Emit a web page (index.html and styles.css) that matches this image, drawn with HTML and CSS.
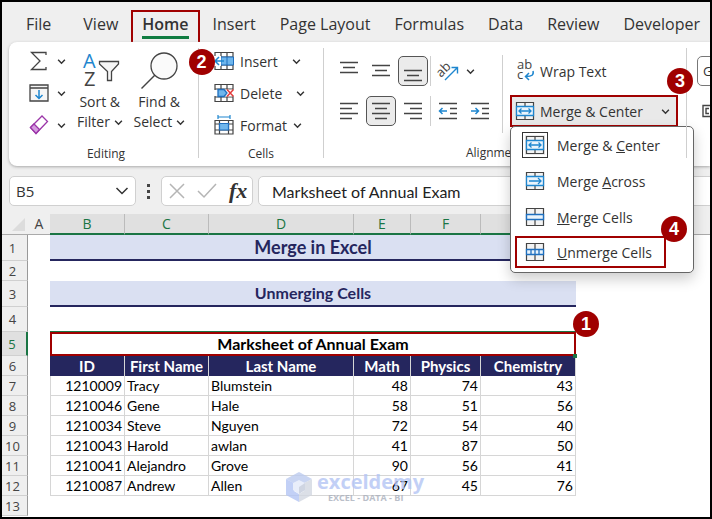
FILE: index.html
```html
<!DOCTYPE html>
<html lang="en">
<head>
    <meta charset="UTF-8">
    <meta name="viewport" content="width=device-width, initial-scale=1.0">
    <title>Merge in Excel</title>
    <link rel="stylesheet" href="styles.css">
</head>
<body>
    <!-- Shared icons -->
    <svg class="sprite" aria-hidden="true">
        <symbol id="chevron" viewBox="0 0 8 8">
            <path d="M1 2.5 L4 5.5 L7 2.5" fill="none" stroke="#333" stroke-width="1.3"/>
        </symbol>
        <symbol id="merge-center" viewBox="0 0 20 20">
            <path d="M1.5 1.5H18.5V18.5H1.5ZM10 1.5V5M10 15V18.5" fill="#f3f3f3" stroke="#444" stroke-width="1.2"/>
            <path d="M1.5 5.5H18.5V14.5H1.5Z" fill="#eaf4fc" stroke="#1e86cf" stroke-width="1.3"/>
            <path d="M4 10H16M6.5 7.5L4 10L6.5 12.5M13.5 7.5L16 10L13.5 12.5" fill="none" stroke="#1e86cf" stroke-width="1.3"/>
        </symbol>
        <symbol id="merge-across" viewBox="0 0 20 20">
            <path d="M1.5 1.5H18.5V18.5H1.5ZM10 1.5V5M10 15V18.5" fill="#f3f3f3" stroke="#444" stroke-width="1.2"/>
            <path d="M1.5 5.5H18.5V14.5H1.5Z" fill="#eaf4fc" stroke="#1e86cf" stroke-width="1.3"/>
            <path d="M4 10H16M13 7L16 10L13 13" fill="none" stroke="#1e86cf" stroke-width="1.3"/>
        </symbol>
        <symbol id="merge-cells" viewBox="0 0 20 20">
            <path d="M1.5 1.5H18.5V18.5H1.5ZM10 1.5V7M10 13V18.5" fill="#f3f3f3" stroke="#444" stroke-width="1.2"/>
            <path d="M1.5 7.5H18.5V12.5H1.5Z" fill="#eaf4fc" stroke="#1e6fbf" stroke-width="1.4"/>
        </symbol>
        <symbol id="unmerge-cells" viewBox="0 0 20 20">
            <path d="M1.5 1.5H18.5V18.5H1.5ZM10 1.5V7M10 13V18.5" fill="#f3f3f3" stroke="#444" stroke-width="1.2"/>
            <path d="M1.5 7.5H18.5V12.5H1.5ZM6 7.5V12.5M10 7.5V12.5M14 7.5V12.5" fill="#eaf4fc" stroke="#1e6fbf" stroke-width="1.3"/>
        </symbol>
    </svg>

    <div class="window">
        <nav class="tabs">
            <button type="button" class="tab tab-file">File</button>
            <button type="button" class="tab">View</button>
            <button type="button" class="tab tab-active">Home<span class="badge badge-home">2</span></button>
            <button type="button" class="tab">Insert</button>
            <button type="button" class="tab">Page Layout</button>
            <button type="button" class="tab">Formulas</button>
            <button type="button" class="tab">Data</button>
            <button type="button" class="tab">Review</button>
            <button type="button" class="tab">Developer</button>
        </nav>

        <div class="ribbon">
            <section class="group group-editing">
                <div class="group-body">
                    <div class="stack">
                        <button type="button" class="small-button" aria-label="AutoSum">
                            <svg class="icon" viewBox="0 0 20 20"><path d="M17 4V1.5H2.5L11 10L2.5 18.5H17V16" fill="none" stroke="#444" stroke-width="1.3"/></svg>
                            <svg class="chevron"><use href="#chevron"/></svg>
                        </button>
                        <button type="button" class="small-button" aria-label="Fill">
                            <svg class="icon" viewBox="0 0 20 20"><path d="M1 2H19V18H1ZM1 5H19" fill="#f6f6f6" stroke="#444" stroke-width="1.3"/><path d="M10 7V15.5M6.5 12L10 15.5L13.5 12" fill="none" stroke="#1e86cf" stroke-width="1.5"/></svg>
                            <svg class="chevron"><use href="#chevron"/></svg>
                        </button>
                        <button type="button" class="small-button" aria-label="Clear">
                            <svg class="icon" viewBox="0 0 20 20"><path d="M1.5 12.5L13 1L18.5 6.5L7 18.5Z" fill="#fff" stroke="#9b35a8" stroke-width="1.3"/><path d="M1.5 12.5L5 9L10.5 14.5L7 18.5Z" fill="#d59be0" stroke="#9b35a8" stroke-width="1.3"/></svg>
                            <svg class="chevron"><use href="#chevron"/></svg>
                        </button>
                    </div>
                    <button type="button" class="big-button">
                        <svg class="big-icon" viewBox="0 0 40 40">
                            <text x="3" y="16" font-family="Open Sans" font-size="20" fill="#1e86cf">A</text>
                            <text x="4" y="34" font-family="Open Sans" font-size="20" fill="#444">Z</text>
                            <path d="M19.5 9.500H38.5V12L31.5 19.5V28.5H27.5V19.5L19.5 12Z" fill="#f6f6f6" stroke="#444" stroke-width="1.3"/>
                        </svg>
                        <span>Sort &amp;</span>
                        <span>Filter <svg class="chevron"><use href="#chevron"/></svg></span>
                    </button>
                    <button type="button" class="big-button">
                        <svg class="big-icon" viewBox="0 0 40 40">
                            <circle cx="25" cy="14" r="13" fill="#fafafa" stroke="#444" stroke-width="1.3"/>
                            <path d="M16 23L2.5 36.5" stroke="#444" stroke-width="1.4"/>
                        </svg>
                        <span>Find &amp;</span>
                        <span>Select <svg class="chevron"><use href="#chevron"/></svg></span>
                    </button>
                </div>
                <div class="group-label">Editing</div>
            </section>

            <section class="group group-cells">
                <div class="group-body">
                    <div class="stack">
                        <button type="button" class="row-button">
                            <svg class="icon" viewBox="0 0 20 20"><path d="M1 1.5H19V18.5H1ZM1 6H19M1 14H19M7 1.5V18.5M13 1.5V18.5" fill="#fff" stroke="#444" stroke-width="1.2"/><path d="M7 6H19.5V14H7Z" fill="#6fb6ec" stroke="#1e6fbf"/><path d="M13 6V14" stroke="#1e6fbf"/><path d="M0 5H7V15H0Z" fill="#fff"/><path d="M1 10H10M5 6L1 10L5 14" fill="none" stroke="#1e86cf" stroke-width="1.5"/></svg>
                            <span>Insert</span>
                            <svg class="chevron chevron-far"><use href="#chevron"/></svg>
                        </button>
                        <button type="button" class="row-button">
                            <svg class="icon" viewBox="0 0 20 20"><path d="M1 1.5H19V18.5H1ZM1 6H19M1 14H19M7 1.5V6M13 1.5V6M7 14V18.5M13 14V18.5" fill="#fff" stroke="#444" stroke-width="1.2"/><path d="M0 7H3V13H0ZM11 6.7H20V13.3H11Z" fill="#fff"/><path d="M4 6.5H10L13 10L10 13.5H4Z" fill="#6fb6ec" stroke="#1e6fbf" stroke-width="1.3"/><path d="M13 6.5L19.5 13.5M19.5 6.5L13 13.5" stroke="#e33b3b" stroke-width="1.5"/></svg>
                            <span>Delete</span>
                            <svg class="chevron chevron-far"><use href="#chevron"/></svg>
                        </button>
                        <button type="button" class="row-button">
                            <svg class="icon" viewBox="0 0 20 20"><path d="M1 5.5H19V19H1ZM1 9H19M1 15H19M5.5 5.5V19M14.5 5.5V19" fill="#fff" stroke="#444" stroke-width="1.2"/><path d="M5.5 8.5H14.5V15H5.5Z" fill="#6fb6ec" stroke="#1e6fbf" stroke-width="1.2"/><path d="M4 2H16M4 0V4M16 0V4" stroke="#1e86cf" stroke-width="1.2"/></svg>
                            <span>Format</span>
                            <svg class="chevron"><use href="#chevron"/></svg>
                        </button>
                    </div>
                </div>
                <div class="group-label">Cells</div>
            </section>

            <section class="group group-alignment">
                <div class="group-body">
                    <div class="tool-rows">
                        <div class="tool-row">
                            <button type="button" class="tool" aria-label="Top Align"><svg class="icon" viewBox="0 0 20 20"><path d="M1 1.5H19M4 6.5H16M1 11.5H19" stroke="#444" stroke-width="1.3"/></svg></button>
                            <button type="button" class="tool" aria-label="Middle Align"><svg class="icon" viewBox="0 0 20 20"><path d="M1 4.5H19M4 9.5H16M1 14.5H19" stroke="#444" stroke-width="1.3"/></svg></button>
                            <button type="button" class="tool tool-on" aria-label="Bottom Align"><svg class="icon" viewBox="0 0 20 20"><path d="M1 9.5H19M4 14.5H16M1 19.5H19" stroke="#444" stroke-width="1.3"/></svg></button>
                            <span class="separator"></span>
                            <button type="button" class="tool tool-wide" aria-label="Orientation">
                                <svg class="icon" viewBox="0 0 20 20"><text x="0" y="14" transform="rotate(-45 5 12)" font-family="Open Sans" font-size="13" fill="#444">ab</text><path d="M7 19L19 7M13.5 6.5H19.5V12.5" fill="none" stroke="#1e86cf" stroke-width="1.4"/></svg>
                                <svg class="chevron"><use href="#chevron"/></svg>
                            </button>
                        </div>
                        <div class="tool-row">
                            <button type="button" class="tool" aria-label="Align Left"><svg class="icon" viewBox="0 0 20 20"><path d="M1 2.5H19M1 7.5H13M1 12.5H19M1 17.5H13" stroke="#444" stroke-width="1.3"/></svg></button>
                            <button type="button" class="tool tool-on" aria-label="Center"><svg class="icon" viewBox="0 0 20 20"><path d="M1 2.5H19M4 7.5H16M1 12.5H19M4 17.5H16" stroke="#444" stroke-width="1.3"/></svg></button>
                            <button type="button" class="tool" aria-label="Align Right"><svg class="icon" viewBox="0 0 20 20"><path d="M1 2.5H19M7 7.5H19M1 12.5H19M7 17.5H19" stroke="#444" stroke-width="1.3"/></svg></button>
                            <span class="separator"></span>
                            <button type="button" class="tool" aria-label="Decrease Indent"><svg class="icon" viewBox="0 0 20 20"><path d="M1 2.5H19M12 7.5H19M12 12.5H19M1 17.5H19" stroke="#444" stroke-width="1.3"/><path d="M1.5 10H9M4.5 7L1.5 10L4.5 13" fill="none" stroke="#1e86cf" stroke-width="1.5"/></svg></button>
                            <button type="button" class="tool" aria-label="Increase Indent"><svg class="icon" viewBox="0 0 20 20"><path d="M1 2.5H19M12 7.5H19M12 12.5H19M1 17.5H19" stroke="#444" stroke-width="1.3"/><path d="M1 10H8.5M5.5 7L8.5 10L5.5 13" fill="none" stroke="#1e86cf" stroke-width="1.5"/></svg></button>
                        </div>
                    </div>
                    <span class="separator separator-tall"></span>
                    <div class="tool-rows wrap-column">
                        <button type="button" class="wide-button">
                            <svg class="icon" viewBox="0 0 20 20"><text x="2" y="8" font-family="Open Sans" font-size="13" fill="#444">ab</text><text x="2" y="18" font-family="Open Sans" font-size="13" fill="#444">c</text><path d="M18 10C19 14 17 15.5 11 15.5M14 12L10.5 15.5L14 19" fill="none" stroke="#1e86cf" stroke-width="1.5"/></svg>
                            <span>Wrap Text</span>
                        </button>
                        <div class="dropdown">
                            <button type="button" class="wide-button merge-button" aria-haspopup="menu" aria-expanded="true">
                                <svg class="icon"><use href="#merge-center"/></svg>
                                <span>Merge &amp; Center</span>
                                <svg class="chevron"><use href="#chevron"/></svg>
                            </button>
                            <span class="badge badge-merge">3</span>
                            <div class="menu" role="menu">
                                <button type="button" class="menu-item" role="menuitem"><svg class="icon icon-on"><use href="#merge-center"/></svg><span>Merge &amp; <u>C</u>enter</span></button>
                                <button type="button" class="menu-item" role="menuitem"><svg class="icon"><use href="#merge-across"/></svg><span>Merge <u>A</u>cross</span></button>
                                <button type="button" class="menu-item" role="menuitem"><svg class="icon"><use href="#merge-cells"/></svg><span><u>M</u>erge Cells</span></button>
                                <button type="button" class="menu-item menu-marked" role="menuitem"><svg class="icon"><use href="#unmerge-cells"/></svg><span><u>U</u>nmerge Cells</span><span class="badge badge-unmerge">4</span></button>
                            </div>
                        </div>
                    </div>
                </div>
                <div class="group-label">Alignment</div>
            </section>

            <section class="group group-number">
                <div class="group-body">
                    <div class="tool-rows">
                        <select class="number-format" aria-label="Number Format"><option>General</option></select>
                        <button type="button" class="tool" aria-label="Accounting Format"><svg class="icon" viewBox="0 0 20 20"><path d="M1 4.5H22V15.5H1Z" fill="#fff" stroke="#444" stroke-width="1.4"/><path d="M7 7.5H4V12.5H7M12 7A3 3 0 0 0 12 13" fill="none" stroke="#444" stroke-width="1.4"/></svg></button>
                    </div>
                </div>
            </section>
        </div>

        <div class="formula-bar">
            <div class="field name-box">
                <input type="text" class="name-input" value="B5" aria-label="Name Box">
                <button type="button" class="plain" aria-label="Open names"><svg class="name-arrow" viewBox="0 0 14 10"><path d="M1.5 2L7 7.5L12.5 2" fill="none" stroke="#333" stroke-width="1.5"/></svg></button>
            </div>
            <div class="dots"><i></i><i></i><i></i></div>
            <div class="field formula-tools">
                <button type="button" class="plain" aria-label="Cancel"><svg width="16" height="16" viewBox="0 0 16 16"><path d="M1 1L15 15M15 1L1 15" stroke="#b5b5b5" stroke-width="1.5"/></svg></button>
                <button type="button" class="plain" aria-label="Enter"><svg width="20" height="16" viewBox="0 0 20 16"><path d="M1 8L7 14L19 1" fill="none" stroke="#b5b5b5" stroke-width="1.5"/></svg></button>
                <button type="button" class="plain fx" aria-label="Insert Function">fx</button>
            </div>
            <input type="text" class="field formula-input" value="Marksheet of Annual Exam" aria-label="Formula Bar">
        </div>

        <div class="sheet">
            <table>
                <colgroup>
                    <col class="col-head"><col class="col-a"><col class="col-b"><col class="col-c"><col class="col-d"><col class="col-e"><col class="col-f"><col class="col-g"><col>
                </colgroup>
                <thead>
                    <tr>
                        <th class="corner"><svg width="13" height="13" viewBox="0 0 13 13"><path d="M13 0V13H0Z" fill="#dcdcdc"/></svg></th>
                        <th>A</th>
                        <th class="picked">B</th>
                        <th class="picked">C</th>
                        <th class="picked">D</th>
                        <th class="picked">E</th>
                        <th class="picked">F</th>
                        <th class="picked">G</th>
                        <th></th>
                    </tr>
                </thead>
                <tbody>
                    <tr class="row-title"><th>1</th><td></td><td colspan="6" class="title">Merge in Excel</td><td></td></tr>
                    <tr><th>2</th><td></td><td colspan="6"></td><td></td></tr>
                    <tr class="row-title"><th>3</th><td></td><td colspan="6" class="title subtitle">Unmerging Cells</td><td></td></tr>
                    <tr class="row-gap"><th>4</th><td></td><td colspan="6"></td><td></td></tr>
                    <tr class="row-merged"><th class="picked-row">5</th><td></td><td colspan="6" class="merged">Marksheet of Annual Exam<span class="handle"></span><span class="badge badge-cell">1</span></td><td></td></tr>
                    <tr class="fields"><th>6</th><td></td><td>ID</td><td>First Name</td><td>Last Name</td><td>Math</td><td>Physics</td><td>Chemistry</td><td></td></tr>
                    <tr class="data"><th>7</th><td></td><td>1210009</td><td class="name">Tracy</td><td class="name">Blumstein</td><td>48</td><td>74</td><td>43</td><td></td></tr>
                    <tr class="data"><th>8</th><td></td><td>1210046</td><td class="name">Gene</td><td class="name">Hale</td><td>58</td><td>51</td><td>56</td><td></td></tr>
                    <tr class="data"><th>9</th><td></td><td>1210034</td><td class="name">Steve</td><td class="name">Nguyen</td><td>72</td><td>54</td><td>40</td><td></td></tr>
                    <tr class="data"><th>10</th><td></td><td>1210043</td><td class="name">Harold</td><td class="name">awlan</td><td>41</td><td>87</td><td>50</td><td></td></tr>
                    <tr class="data"><th>11</th><td></td><td>1210041</td><td class="name">Alejandro</td><td class="name">Grove</td><td>90</td><td>56</td><td>41</td><td></td></tr>
                    <tr class="data"><th>12</th><td></td><td>1210087</td><td class="name">Andrew</td><td class="name">Allen</td><td>67</td><td>45</td><td>76</td><td></td></tr>
                    <tr><th>13</th><td></td><td colspan="6"></td><td></td></tr>
                </tbody>
            </table>
            <div class="watermark">
                <svg width="28" height="32" viewBox="0 0 28 32">
                    <path d="M14 1L27 8L14 15L1 8Z" fill="#bccbf0"/>
                    <path d="M1 8L9 12V20L14 23V31L1 24Z" fill="#b4c5f5"/>
                    <path d="M27 8L19 12V20L14 23V31L27 24Z" fill="#d3d8e2"/>
                    <path d="M14 9L20 12V19L14 23L8 19V12Z" fill="#e4eafa"/>
                    <path d="M14 16L20 12V19L14 23Z" fill="#c4cbdc"/>
                </svg>
                <div>
                    <div class="watermark-name">exceldemy</div>
                    <div class="watermark-line">EXCEL - DATA - BI</div>
                </div>
            </div>
        </div>
    </div>
</body>
</html>
```

FILE: styles.css
```css
* {
    box-sizing: border-box;
}
body {
    margin: 0;
    font-family: "Open Sans", "Noto Sans", sans-serif;
    font-size: 13px;
    color: #333;
}
button, input, select {
    font: inherit;
    color: inherit;
}
button {
    border: none;
    background: none;
    padding: 0;
    margin: 0;
    white-space: nowrap;
}
.sprite {
    display: none;
}
.window {
    display: flex;
    flex-direction: column;
    min-height: 100vh;
    border: 2px solid #000;
    background-color: #efefef;
    overflow: hidden;
}

/* Tabs */
.tabs {
    display: flex;
    height: 40px;
    padding: 8px 0 0 24px;
    gap: 24px;
}
.tab {
    height: 28px;
    font-size: 16px;
}
.tab-file {
    margin-right: 8px;
}
.tab-active {
    position: relative;
    display: flex;
    flex-direction: column;
    height: 37px;
    margin: 0 -11px;
    padding: 0 9px;
    border: 2px solid #a00000;
    font-weight: 600;
    line-height: 24px;
}
.tab-active::after {
    content: "";
    width: 100%;
    height: 3px;
    background-color: #107c41;
}

/* Numbered markers */
.badge {
    position: absolute;
    z-index: 5;
    width: 26px;
    height: 26px;
    border-radius: 50%;
    background-color: #a00000;
    color: #fff;
    font-family: "Liberation Sans", Arial, sans-serif;
    font-size: 18px;
    font-weight: bold;
    line-height: 26px;
    text-align: center;
}
.badge-home {
    right: -17px;
    top: 37px;
}
.badge-merge {
    right: -15px;
    top: -27px;
}
.badge-unmerge {
    right: -23px;
    top: -22px;
}
.badge-cell {
    right: -25px;
    top: -23px;
}

/* Ribbon */
.ribbon {
    position: relative;
    z-index: 2;
    display: flex;
    height: 124px;
    margin-left: 7px;
    border-radius: 8px 0 0 8px;
    background-color: #fff;
    box-shadow: 0 1px 3px #aaa;
}
.group {
    flex: none;
    display: flex;
    flex-direction: column;
    position: relative;
    padding-top: 3px;
}
.group::after {
    content: "";
    position: absolute;
    right: 0;
    top: 6px;
    bottom: 8px;
    width: 1px;
    background-color: #cfcfcf;
}
.group-body {
    display: flex;
    height: 96px;
}
.group-label {
    font-size: 12px;
    line-height: 26px;
    text-align: center;
}
.group-editing {
    width: 190px;
    padding-left: 20px;
}
.group-editing .group-body {
    gap: 11px;
}
.group-editing .group-label, .group-cells .group-label {
    padding-right: 16px;
}
.group-cells {
    width: 125px;
    padding-left: 15px;
}
.group-alignment {
    width: 363px;
    padding-left: 10px;
}
.group-alignment .group-label {
    padding-right: 32px;
}
.group-number {
    width: 160px;
    padding-left: 10px;
}
.icon {
    flex: none;
    width: 20px;
    height: 20px;
    overflow: visible;
}
.chevron {
    flex: none;
    width: 9px;
    height: 9px;
}
.small-button {
    display: flex;
    align-items: center;
    gap: 8px;
    height: 32px;
}
.row-button {
    display: flex;
    align-items: center;
    gap: 6px;
    height: 32px;
    font-size: 14px;
}
.chevron-far {
    margin-left: 8px;
}
.big-button {
    display: flex;
    flex-direction: column;
    align-items: center;
    padding-top: 7px;
    font-size: 14px;
    line-height: 20px;
}
.big-icon {
    width: 40px;
    height: 40px;
}
.tool-rows {
    display: flex;
    flex-direction: column;
    gap: 10px;
    padding-top: 11px;
}
.tool-row {
    display: flex;
    gap: 2px;
}
.tool {
    display: flex;
    align-items: center;
    justify-content: center;
    width: 30px;
    height: 30px;
    border-radius: 5px;
}
.tool-wide {
    width: 46px;
    gap: 8px;
}
.tool-on {
    border: 1px solid #555;
    background-color: #ebebeb;
}
.separator {
    width: 1px;
    background-color: #cfcfcf;
}
.separator-tall {
    height: 78px;
    margin: 10px 7px 0;
}
.wrap-column {
    flex: 1;
    gap: 9px;
    padding-right: 9px;
}
.wide-button {
    display: flex;
    align-items: center;
    gap: 5px;
    width: 100%;
    height: 30px;
    padding: 0 7px 0 5px;
    font-size: 14px;
}
.merge-button {
    border: 2px solid #a00000;
    height: 32px;
    padding: 0 6px 0 3px;
    background-color: #e9e9e9;
}
.merge-button .chevron {
    margin-left: auto;
}
.dropdown {
    position: relative;
}
.number-format {
    width: 140px;
    height: 30px;
    padding: 0 0 0 1px;
    border: 1px solid #777;
    border-radius: 5px;
    background-color: #fff;
}

/* Drop-down menu */
.menu {
    position: absolute;
    left: 0;
    top: 31px;
    width: 184px;
    padding: 0 4px 1px;
    border: 1px solid #666;
    border-radius: 5px;
    background-color: #fff;
    box-shadow: 0 6px 14px rgba(0, 0, 0, 0.2);
}
.menu-item {
    display: flex;
    align-items: center;
    gap: 12px;
    width: 100%;
    height: 36px;
    padding-left: 10px;
    font-size: 14px;
}
.icon-on {
    outline: 1px solid #333;
    outline-offset: 2px;
    background-color: #e9e9e9;
}
.menu-marked {
    position: relative;
    width: 151px;
    height: 32px;
    margin: 1px 0 3px;
    padding-left: 8px;
    border: 2px solid #a00000;
}

/* Formula bar */
.formula-bar {
    display: flex;
    align-items: center;
    height: 48px;
    padding: 2px 0 0 7px;
}
.field {
    display: flex;
    align-items: center;
    height: 30px;
    border: 1px solid #d0d0d0;
    border-radius: 5px;
    background-color: #fff;
}
.plain {
    display: flex;
}
.name-box {
    width: 127px;
    padding: 0 6px;
}
.name-input {
    flex: 1;
    min-width: 0;
    border: none;
    padding: 0;
    font-size: 15px;
}
.name-arrow {
    width: 14px;
    height: 10px;
}
.dots {
    display: flex;
    flex-direction: column;
    gap: 3px;
    margin: 0 11px;
}
.dots i {
    width: 3px;
    height: 3px;
    background-color: #444;
}
.formula-tools {
    width: 92px;
    gap: 12px;
    padding-left: 7px;
}
.fx {
    font-family: "Liberation Serif", "Times New Roman", serif;
    font-size: 22px;
    font-style: italic;
    font-weight: bold;
    line-height: 24px;
}
.formula-input {
    flex: 1;
    min-width: 0;
    margin: 0 -8px 0 5px;
    padding: 0 13px;
    font-family: Lato, sans-serif;
    font-size: 16px;
    color: #222;
}

/* Sheet */
.sheet {
    position: relative;
    flex: 1;
    background-color: #fff;
    overflow: hidden;
}
table {
    width: 100%;
    table-layout: fixed;
    border-collapse: separate;
    border-spacing: 0;
    font-family: Lato, Carlito, sans-serif;
    font-size: 14px;
    line-height: 18px;
    color: #000;
}
.col-head { width: 26px; }
.col-a { width: 22px; }
.col-b { width: 75px; }
.col-c { width: 84px; }
.col-d { width: 145px; }
.col-e { width: 57px; }
.col-f { width: 70px; }
.col-g { width: 95px; }
th, td {
    height: 20px;
    padding: 0;
    white-space: nowrap;
}
th {
    background-color: #efefef;
    border-bottom: 1px solid #d0d0d0;
    color: #444;
    font-family: "Open Sans", sans-serif;
    font-size: 13px;
    font-weight: normal;
}
thead th {
    height: 21px;
    border-bottom-color: #aaa;
    font-size: 14px;
}
thead .picked {
    border-bottom: 2px solid #1a7544;
    border-right: 1px solid #bbb;
    background-color: #e0e0e0;
    color: #1a7544;
}
.corner svg {
    display: block;
    margin: 1px 3px 0 auto;
}
tbody th {
    border-right: 1px solid #999;
    padding-right: 4px;
}
.row-title th, .row-title td {
    height: 26px;
}
.row-gap th {
    height: 25px;
}
.row-merged th {
    height: 24px;
}
th.picked-row {
    border-right: 2px solid #1a7544;
    background-color: #e0e0e0;
    color: #1a7544;
}
.title {
    border-bottom: 2px solid #25265e;
    background-color: #dae0f2;
    color: #25265e;
    font-size: 18px;
    font-weight: bold;
    text-align: center;
}
.subtitle {
    font-size: 16px;
}
.merged {
    position: relative;
    border: 2px solid #a00000;
    box-shadow: 0 -1px #1a7544;
    font-size: 16px;
    font-weight: bold;
    text-align: center;
}
.handle {
    position: absolute;
    right: -3px;
    bottom: -4px;
    width: 4px;
    height: 4px;
    background-color: #1a7544;
}
.fields td:nth-child(n+3):nth-child(-n+8) {
    border-right: 1px solid #d6d6d6;
    background-color: #25265e;
    color: #fff;
    font-size: 15px;
    font-weight: bold;
    text-align: center;
}
.data td:nth-child(n+3):nth-child(-n+8) {
    padding: 0 2px;
    border-right: 1px solid #d6d6d6;
    border-bottom: 1px solid #d6d6d6;
    text-align: right;
}
.data td:nth-child(3) {
    border-left: 1px solid #d6d6d6;
}
.data td.name:nth-child(n+3):nth-child(-n+8) {
    text-align: left;
}

/* Watermark */
.watermark {
    position: absolute;
    left: 283px;
    top: 257px;
    display: flex;
    gap: 4px;
    opacity: 0.8;
}
.watermark-name {
    color: #b4c5f5;
    font-size: 20px;
    font-weight: bold;
    line-height: 22px;
}
.watermark-line {
    padding-left: 11px;
    color: #aab0bc;
    font-size: 9px;
    font-weight: bold;
    line-height: 10px;
}
```
